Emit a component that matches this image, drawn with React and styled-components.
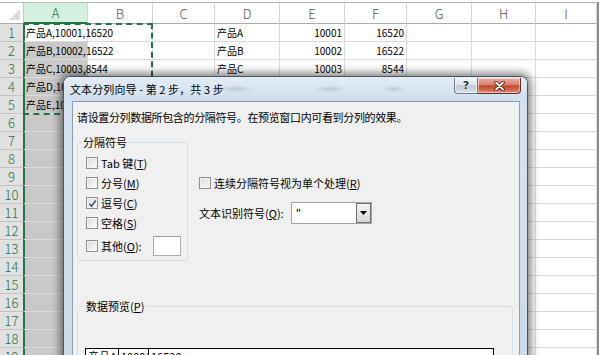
import React from 'react'
import styled, { createGlobalStyle } from 'styled-components'

const FONT = `"Noto Sans CJK SC", "Noto Sans", sans-serif`

const GlobalStyle = createGlobalStyle`
  html, body {
    margin: 0;
    padding: 0;
    background: #fff;
    overflow: hidden;
  }
  body {
    font-family: ${FONT};
  }
`

const COLS = [
  { key: 'A', w: 64 },
  { key: 'B', w: 65 },
  { key: 'C', w: 62 },
  { key: 'D', w: 65 },
  { key: 'E', w: 65 },
  { key: 'F', w: 62 },
  { key: 'G', w: 65 },
  { key: 'H', w: 64 },
  { key: 'I', w: 61 },
]

const DATA = {
  1: { A: '产品A,10001,16520', D: '产品A', E: '10001', F: '16520' },
  2: { A: '产品B,10002,16522', D: '产品B', E: '10002', F: '16522' },
  3: { A: '产品C,10003,8544', D: '产品C', E: '10003', F: '8544' },
  4: { A: '产品D,10004,12050', D: '产品D', E: '10004', F: '12050' },
  5: { A: '产品E,10005,9860', D: '产品E', E: '10005', F: '9860' },
}
const NUMERIC = ['E', 'F']
const ROWS = Array.from({ length: 19 }, (_, i) => i + 1)

// ---------- spreadsheet ----------
const Sheet = styled.div`
  position: relative;
  width: 603px;
  height: 355px;
  overflow: hidden;
  padding-top: 2px;
  box-sizing: border-box;
  background: #fff;
`

const Grid = styled.div`
  display: grid;
  grid-template-columns: 24px ${COLS.map(c => c.w + 'px').join(' ')};
  grid-template-rows: 21px;
  grid-auto-rows: 18px;
  width: 599px;
  border-top: 1px solid #b9b9b9;
  border-right: 2px solid #8d8d8d;
  box-sizing: border-box;
`

const Corner = styled.div`
  display: flex;
  justify-content: flex-end;
  align-items: flex-end;
  padding: 0 3px 3px 0;
  box-sizing: border-box;
  border-right: 1px solid #c6c6c6;
  border-bottom: 1px solid #ababab;
  background: #fff;
`

const Triangle = styled.span`
  width: 0;
  height: 0;
  border-left: 11px solid transparent;
  border-bottom: 11px solid #dcdcdc;
`

const ColHead = styled.div`
  display: flex;
  align-items: center;
  justify-content: center;
  box-sizing: border-box;
  font-size: 13px;
  font-weight: 300;
  color: ${p => (p.$sel ? '#217346' : '#555')};
  background: ${p => (p.$sel ? '#d3f0e0' : '#fff')};
  border-right: 1px solid #d4d4d4;
  border-bottom: ${p => (p.$sel ? '2px solid #217346' : '1px solid #ababab')};
`

const RowHead = styled.div`
  display: flex;
  align-items: center;
  justify-content: center;
  box-sizing: border-box;
  font-size: 13px;
  font-weight: 300;
  color: #217346;
  background: #e1e1e1;
  border-right: 1px solid #217346;
  border-bottom: 1px solid #c3c3c3;
`

const Cell = styled.div`
  box-sizing: border-box;
  font-size: 10px;
  line-height: 17px;
  padding: 0 2px;
  white-space: nowrap;
  color: #000;
  text-align: ${p => (p.$num ? 'right' : 'left')};
  background: ${p => (p.$sel ? '#c9c9c9' : 'transparent')};
  border-right: 1px solid #dadada;
  border-bottom: 1px solid #dadada;
  box-shadow: ${p => (p.$edge ? 'inset 1px 0 0 #217346' : 'none')};
`

const CopyMarquee = styled.div`
  position: absolute;
  left: 23px;
  top: 23px;
  width: 130px;
  height: 92px;
  box-sizing: border-box;
  border: 2px dashed #217346;
  pointer-events: none;
`

// ---------- dialog window ----------
const Window = styled.div`
  position: absolute;
  left: 63px;
  top: 76px;
  width: 465px;
  height: 300px;
  box-sizing: border-box;
  display: flex;
  flex-direction: column;
  border: 1px solid rgba(30, 40, 50, 0.75);
  border-radius: 7px 7px 0 0;
  background: linear-gradient(180deg, #d6e3f0 0%, #ccd9e6 100%);
  box-shadow: 0 0 9px 3px rgba(0, 0, 0, 0.5);
  font-family: ${FONT};
  font-size: 11px;
`

const TitleBar = styled.div`
  display: flex;
  align-items: center;
  height: 24px;
  padding-left: 6px;
  flex: none;
  border-radius: 6px 6px 0 0;
  background:
    radial-gradient(ellipse 16px 4px at 172px 12px, rgba(110, 120, 130, 0.28), transparent),
    radial-gradient(ellipse 16px 4px at 266px 12px, rgba(110, 120, 130, 0.25), transparent),
    radial-gradient(ellipse 12px 4px at 330px 12px, rgba(110, 120, 130, 0.25), transparent),
    linear-gradient(180deg, #e3ecf6 0%, #cfdeed 100%);
`

const Title = styled.span`
  color: #000;
  font-size: 11px;
  letter-spacing: 0.1px;
  white-space: nowrap;
`

const Captions = styled.div`
  display: flex;
  align-self: flex-start;
  margin: 1px 6px 0 auto;
`

const CaptionButton = styled.div`
  display: flex;
  align-items: center;
  justify-content: center;
  box-sizing: border-box;
  height: 16px;
  width: ${p => (p.$close ? 43 : 24)}px;
  border: 1px solid ${p => (p.$close ? '#6a2a20' : '#6f7c8a')};
  border-top: none;
  border-left: ${p => (p.$close ? 'none' : undefined)};
  border-radius: ${p => (p.$close ? '0 0 4px 0' : '0 0 0 4px')};
  background: ${p =>
    p.$close
      ? 'linear-gradient(180deg, #eab2a6 0%, #d7806d 45%, #c4462f 52%, #cf6a52 80%, #e09a85 100%)'
      : 'linear-gradient(180deg, #f1f5f9 0%, #d8e1ea 45%, #c0ccd8 52%, #cbd6e1 80%, #e2e9f0 100%)'};
  box-shadow: inset 0 0 0 1px rgba(255, 255, 255, 0.45);
`

const HelpGlyph = styled.span`
  font-family: "DejaVu Sans", sans-serif;
  font-weight: bold;
  font-size: 11px;
  line-height: 1;
  color: #24303d;
  text-shadow: 0 0 2px #fff, 0 0 1px #fff;
`

const Client = styled.div`
  flex: 1;
  margin: 0 7px 0 8px;
  padding: 7px 6px 0 4px;
  background: #f0f0f0;
  border: 1px solid #8d9db0;
  border-bottom: none;
  color: #000;
`

const Intro = styled.div`
  line-height: 16px;
  height: 16px;
  letter-spacing: -0.35px;
  white-space: nowrap;
`

const MainRow = styled.div`
  display: flex;
  align-items: flex-start;
  margin-top: 9px;
`

const Group = styled.fieldset`
  margin: ${p => p.$top || 0}px 0 0 0;
  padding: ${p => p.$pad};
  width: ${p => p.$w}px;
  box-sizing: border-box;
  min-width: 0;
  border: 1px solid #d5dfe5;
  border-radius: 3px;
`

const Legend = styled.legend`
  padding: 0 1px;
  line-height: 16px;
  font-size: 11px;
  color: #000;
`

const OptionList = styled.div`
  display: flex;
  flex-direction: column;
  padding-left: 4px;
`

const OptionRow = styled.label`
  display: flex;
  align-items: center;
  gap: 3px;
  height: ${p => p.$h || 20}px;
  margin-top: ${p => p.$mt || 0}px;
  white-space: nowrap;
`

const Box = styled.span`
  display: inline-flex;
  align-items: center;
  justify-content: center;
  flex: none;
  width: 12px;
  height: 12px;
  box-sizing: border-box;
  border: 1px solid #8e8f8f;
  background: linear-gradient(135deg, #d9d9d9 0%, #f0f0f0 60%, #fdfdfd 100%);
  box-shadow: inset 0 0 0 1px #f4f4f4;
`

const SmallInput = styled.span`
  display: block;
  width: 31px;
  height: 20px;
  margin-left: 8px;
  box-sizing: border-box;
  background: #fff;
  border: 1px solid #abadb3;
  border-top-color: #9a9da4;
`

const RightColumn = styled.div`
  display: flex;
  flex-direction: column;
  padding: 39px 0 0 11px;
`

const FieldRow = styled.div`
  display: flex;
  align-items: center;
  height: 22px;
  margin-top: 9px;
  white-space: nowrap;
`

const Combo = styled.div`
  display: flex;
  align-items: stretch;
  width: 81px;
  height: 22px;
  margin-left: 7px;
  box-sizing: border-box;
  background: #fff;
  border: 1px solid #a5a5a5;
`

const ComboValue = styled.span`
  flex: 1;
  padding-left: 4px;
  line-height: 18px;
  font-size: 11px;
`

const ComboButton = styled.span`
  display: flex;
  align-items: center;
  justify-content: center;
  width: 15px;
  box-sizing: border-box;
  border: 1px solid #707070;
  background: linear-gradient(180deg, #f3f3f3 0%, #e6e6e6 50%, #d5d5d5 100%);
`

const PreviewTable = styled.div`
  display: grid;
  grid-template-columns: 33px 30px 1fr;
  width: 407px;
  border: 1px solid #000;
  background: #fff;
  font-size: 11px;
  line-height: 15px;
`

const PreviewCell = styled.span`
  padding: 0 2px;
  border-right: ${p => (p.$last ? 'none' : '1px solid #000')};
  white-space: nowrap;
  overflow: hidden;
`

function Check({ on }) {
  return (
    <Box>
      {on && (
        <svg width="9" height="9" viewBox="0 0 10 10">
          <path d="M1.6 5.2 L4 8 L8.6 1.6" fill="none" stroke="#3b4f8c" strokeWidth="1.7" />
        </svg>
      )}
    </Box>
  )
}

function Option({ label, keyChar, on, h, mt, children }) {
  return (
    <OptionRow $h={h} $mt={mt}>
      <Check on={on} />
      <span>
        {label}(<u>{keyChar}</u>){children ? ':' : ''}
      </span>
      {children}
    </OptionRow>
  )
}

function Spreadsheet() {
  return (
    <Grid>
      <Corner>
        <Triangle />
      </Corner>
      {COLS.map(c => (
        <ColHead key={c.key} $sel={c.key === 'A'}>
          {c.key}
        </ColHead>
      ))}
      {ROWS.map(r => (
        <React.Fragment key={r}>
          <RowHead>{r}</RowHead>
          {COLS.map(c => {
            const v = DATA[r] && DATA[r][c.key]
            const isA = c.key === 'A'
            return (
              <Cell
                key={c.key}
                $sel={isA && r > 1}
                $edge={isA}
                $num={NUMERIC.includes(c.key)}
              >
                {v || ''}
              </Cell>
            )
          })}
        </React.Fragment>
      ))}
    </Grid>
  )
}

function TextWizard() {
  return (
    <Window>
      <TitleBar>
        <Title>文本分列向导 - 第 2 步，共 3 步</Title>
        <Captions>
          <CaptionButton>
            <HelpGlyph>?</HelpGlyph>
          </CaptionButton>
          <CaptionButton $close>
            <svg width="11" height="10" viewBox="0 0 11 10">
              <path d="M2 1.5 L9 8.5 M9 1.5 L2 8.5" stroke="#4a1910" strokeWidth="3.6" strokeLinecap="round" />
              <path d="M2 1.5 L9 8.5 M9 1.5 L2 8.5" stroke="#fff" strokeWidth="1.8" strokeLinecap="round" />
            </svg>
          </CaptionButton>
        </Captions>
      </TitleBar>
      <Client>
        <Intro>请设置分列数据所包含的分隔符号。在预览窗口内可看到分列的效果。</Intro>
        <MainRow>
          <Group $w={111} $pad="3px 6px 3px 4px">
            <Legend>分隔符号</Legend>
            <OptionList>
              <Option label="Tab 键" keyChar="T" />
              <Option label="分号" keyChar="M" />
              <Option label="逗号" keyChar="C" on />
              <Option label="空格" keyChar="S" />
              <Option label="其他" keyChar="O" h={22} mt={2}>
                <SmallInput />
              </Option>
            </OptionList>
          </Group>
          <RightColumn>
            <Option label="连续分隔符号视为单个处理" keyChar="R" />
            <FieldRow>
              <span>
                文本识别符号(<u>Q</u>):
              </span>
              <Combo>
                <ComboValue>"</ComboValue>
                <ComboButton>
                  <svg width="7" height="4" viewBox="0 0 7 4">
                    <path d="M0 0 H7 L3.5 4 Z" fill="#000" />
                  </svg>
                </ComboButton>
              </Combo>
            </FieldRow>
          </RightColumn>
        </MainRow>
        <Group $w={436} $top={37} $pad="34px 7px 10px 7px">
          <Legend>
            数据预览(<u>P</u>)
          </Legend>
          <PreviewTable>
            <PreviewCell>产品A</PreviewCell>
            <PreviewCell>10001</PreviewCell>
            <PreviewCell $last>16520</PreviewCell>
          </PreviewTable>
        </Group>
      </Client>
    </Window>
  )
}

export default function App() {
  return (
    <>
      <GlobalStyle />
      <Sheet>
        <Spreadsheet />
        <CopyMarquee />
        <TextWizard />
      </Sheet>
    </>
  )
}
